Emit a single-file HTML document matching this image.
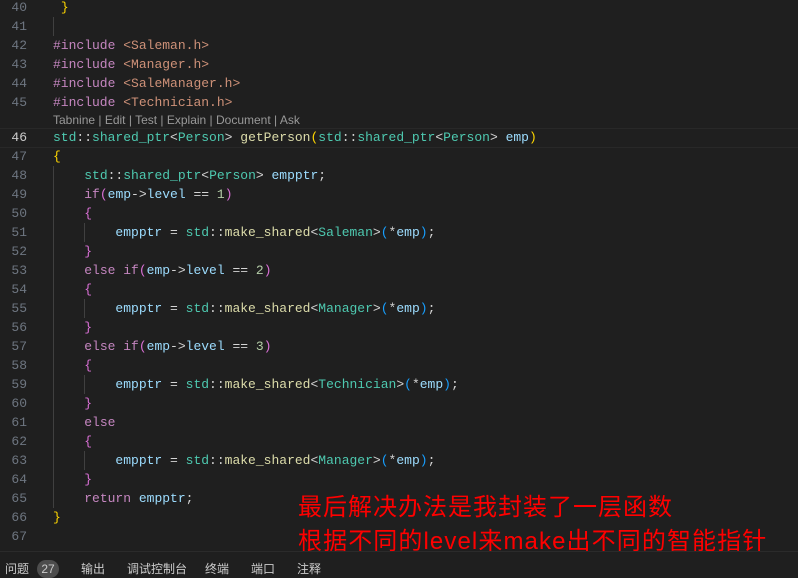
<!DOCTYPE html>
<html><head><meta charset="utf-8"><style>
body{margin:0;width:798px;height:576px;background:#1f1f1f;overflow:hidden;position:relative;font-family:"Liberation Mono",monospace;}
.r{position:absolute;left:0;height:19px;line-height:19px;font-size:13px;white-space:pre;width:798px}
.n{position:absolute;left:0;width:27px;text-align:right;color:#6e7681}
.c{position:absolute;left:53px;color:#d4d4d4}
.k{color:#c586c0}.t{color:#4ec9b0}.v{color:#9cdcfe}.f{color:#dcdcaa}.s{color:#ce9178}.m{color:#b5cea8}
.b1{color:#ffd700}.b2{color:#da70d6}.b3{color:#179fff}
.g{position:absolute;width:1px;background:#404040}
.lens{position:absolute;left:53px;top:112px;font-family:"Liberation Sans",sans-serif;font-size:12px;color:#999;line-height:16px}
.red{position:absolute;left:298px;color:#ff0000;font-family:"Liberation Sans","Noto Sans CJK SC",sans-serif;font-size:24px;letter-spacing:1px;white-space:nowrap;line-height:30px}
.panel{position:absolute;left:0;top:551px;width:798px;height:25px;border-top:1px solid #2b2b2b;background:#1f1f1f;font-family:"Liberation Sans","Noto Sans CJK SC",sans-serif;font-size:12px;color:#ccc}
.panel span{position:absolute;top:10px;line-height:14px}
</style></head><body>
<div class="g" style="left:53px;top:17px;height:19px"></div>
<div class="g" style="left:53px;top:166px;height:342px"></div>
<div class="g" style="left:84px;top:223px;height:19px"></div>
<div class="g" style="left:84px;top:299px;height:19px"></div>
<div class="g" style="left:84px;top:375px;height:19px"></div>
<div class="g" style="left:84px;top:451px;height:19px"></div>
<div class="r" style="top:-2px"><span class="n">40</span><span class="c"> <span class="b1">}</span></span></div>
<div class="r" style="top:17px"><span class="n">41</span></div>
<div class="r" style="top:36px"><span class="n">42</span><span class="c"><span class="k">#include</span> <span class="s">&lt;Saleman.h&gt;</span></span></div>
<div class="r" style="top:55px"><span class="n">43</span><span class="c"><span class="k">#include</span> <span class="s">&lt;Manager.h&gt;</span></span></div>
<div class="r" style="top:74px"><span class="n">44</span><span class="c"><span class="k">#include</span> <span class="s">&lt;SaleManager.h&gt;</span></span></div>
<div class="r" style="top:93px"><span class="n">45</span><span class="c"><span class="k">#include</span> <span class="s">&lt;Technician.h&gt;</span></span></div>
<div class="lens">Tabnine | Edit | Test | Explain | Document | Ask</div>
<div class="r" style="top:128px;border-top:1px solid #282828;border-bottom:1px solid #282828;height:18px;line-height:18px"><span class="n" style="color:#ccc">46</span><span class="c"><span class="t">std</span>::<span class="t">shared_ptr</span>&lt;<span class="t">Person</span>&gt; <span class="f">getPerson</span><span class="b1">(</span><span class="t">std</span>::<span class="t">shared_ptr</span>&lt;<span class="t">Person</span>&gt; <span class="v">emp</span><span class="b1">)</span></span></div>
<div class="r" style="top:147px"><span class="n">47</span><span class="c"><span class="b1">{</span></span></div>
<div class="r" style="top:166px"><span class="n">48</span><span class="c">    <span class="t">std</span>::<span class="t">shared_ptr</span>&lt;<span class="t">Person</span>&gt; <span class="v">empptr</span>;</span></div>
<div class="r" style="top:185px"><span class="n">49</span><span class="c">    <span class="k">if</span><span class="b2">(</span><span class="v">emp</span>-&gt;<span class="v">level</span> == <span class="m">1</span><span class="b2">)</span></span></div>
<div class="r" style="top:204px"><span class="n">50</span><span class="c">    <span class="b2">{</span></span></div>
<div class="r" style="top:223px"><span class="n">51</span><span class="c">        <span class="v">empptr</span> = <span class="t">std</span>::<span class="f">make_shared</span>&lt;<span class="t">Saleman</span>&gt;<span class="b3">(</span>*<span class="v">emp</span><span class="b3">)</span>;</span></div>
<div class="r" style="top:242px"><span class="n">52</span><span class="c">    <span class="b2">}</span></span></div>
<div class="r" style="top:261px"><span class="n">53</span><span class="c">    <span class="k">else if</span><span class="b2">(</span><span class="v">emp</span>-&gt;<span class="v">level</span> == <span class="m">2</span><span class="b2">)</span></span></div>
<div class="r" style="top:280px"><span class="n">54</span><span class="c">    <span class="b2">{</span></span></div>
<div class="r" style="top:299px"><span class="n">55</span><span class="c">        <span class="v">empptr</span> = <span class="t">std</span>::<span class="f">make_shared</span>&lt;<span class="t">Manager</span>&gt;<span class="b3">(</span>*<span class="v">emp</span><span class="b3">)</span>;</span></div>
<div class="r" style="top:318px"><span class="n">56</span><span class="c">    <span class="b2">}</span></span></div>
<div class="r" style="top:337px"><span class="n">57</span><span class="c">    <span class="k">else if</span><span class="b2">(</span><span class="v">emp</span>-&gt;<span class="v">level</span> == <span class="m">3</span><span class="b2">)</span></span></div>
<div class="r" style="top:356px"><span class="n">58</span><span class="c">    <span class="b2">{</span></span></div>
<div class="r" style="top:375px"><span class="n">59</span><span class="c">        <span class="v">empptr</span> = <span class="t">std</span>::<span class="f">make_shared</span>&lt;<span class="t">Technician</span>&gt;<span class="b3">(</span>*<span class="v">emp</span><span class="b3">)</span>;</span></div>
<div class="r" style="top:394px"><span class="n">60</span><span class="c">    <span class="b2">}</span></span></div>
<div class="r" style="top:413px"><span class="n">61</span><span class="c">    <span class="k">else</span></span></div>
<div class="r" style="top:432px"><span class="n">62</span><span class="c">    <span class="b2">{</span></span></div>
<div class="r" style="top:451px"><span class="n">63</span><span class="c">        <span class="v">empptr</span> = <span class="t">std</span>::<span class="f">make_shared</span>&lt;<span class="t">Manager</span>&gt;<span class="b3">(</span>*<span class="v">emp</span><span class="b3">)</span>;</span></div>
<div class="r" style="top:470px"><span class="n">64</span><span class="c">    <span class="b2">}</span></span></div>
<div class="r" style="top:489px"><span class="n">65</span><span class="c">    <span class="k">return</span> <span class="v">empptr</span>;</span></div>
<div class="r" style="top:508px"><span class="n">66</span><span class="c"><span class="b1">}</span></span></div>
<div class="r" style="top:527px"><span class="n">67</span></div>
<div class="red" style="top:493px">最后解决办法是我封装了一层函数</div>
<div class="red" style="top:527px;letter-spacing:1.1px">根据不同的level来make出不同的智能指针</div>
<div class="panel">
<span style="left:5px">问题</span>
<span style="left:37px;top:8px;width:22px;height:18px;border-radius:9px;background:#4d4d4d;text-align:center;line-height:18px">27</span>
<span style="left:81px">输出</span>
<span style="left:127px">调试控制台</span>
<span style="left:205px">终端</span>
<span style="left:251px">端口</span>
<span style="left:297px">注释</span>
</div>
</body></html>
